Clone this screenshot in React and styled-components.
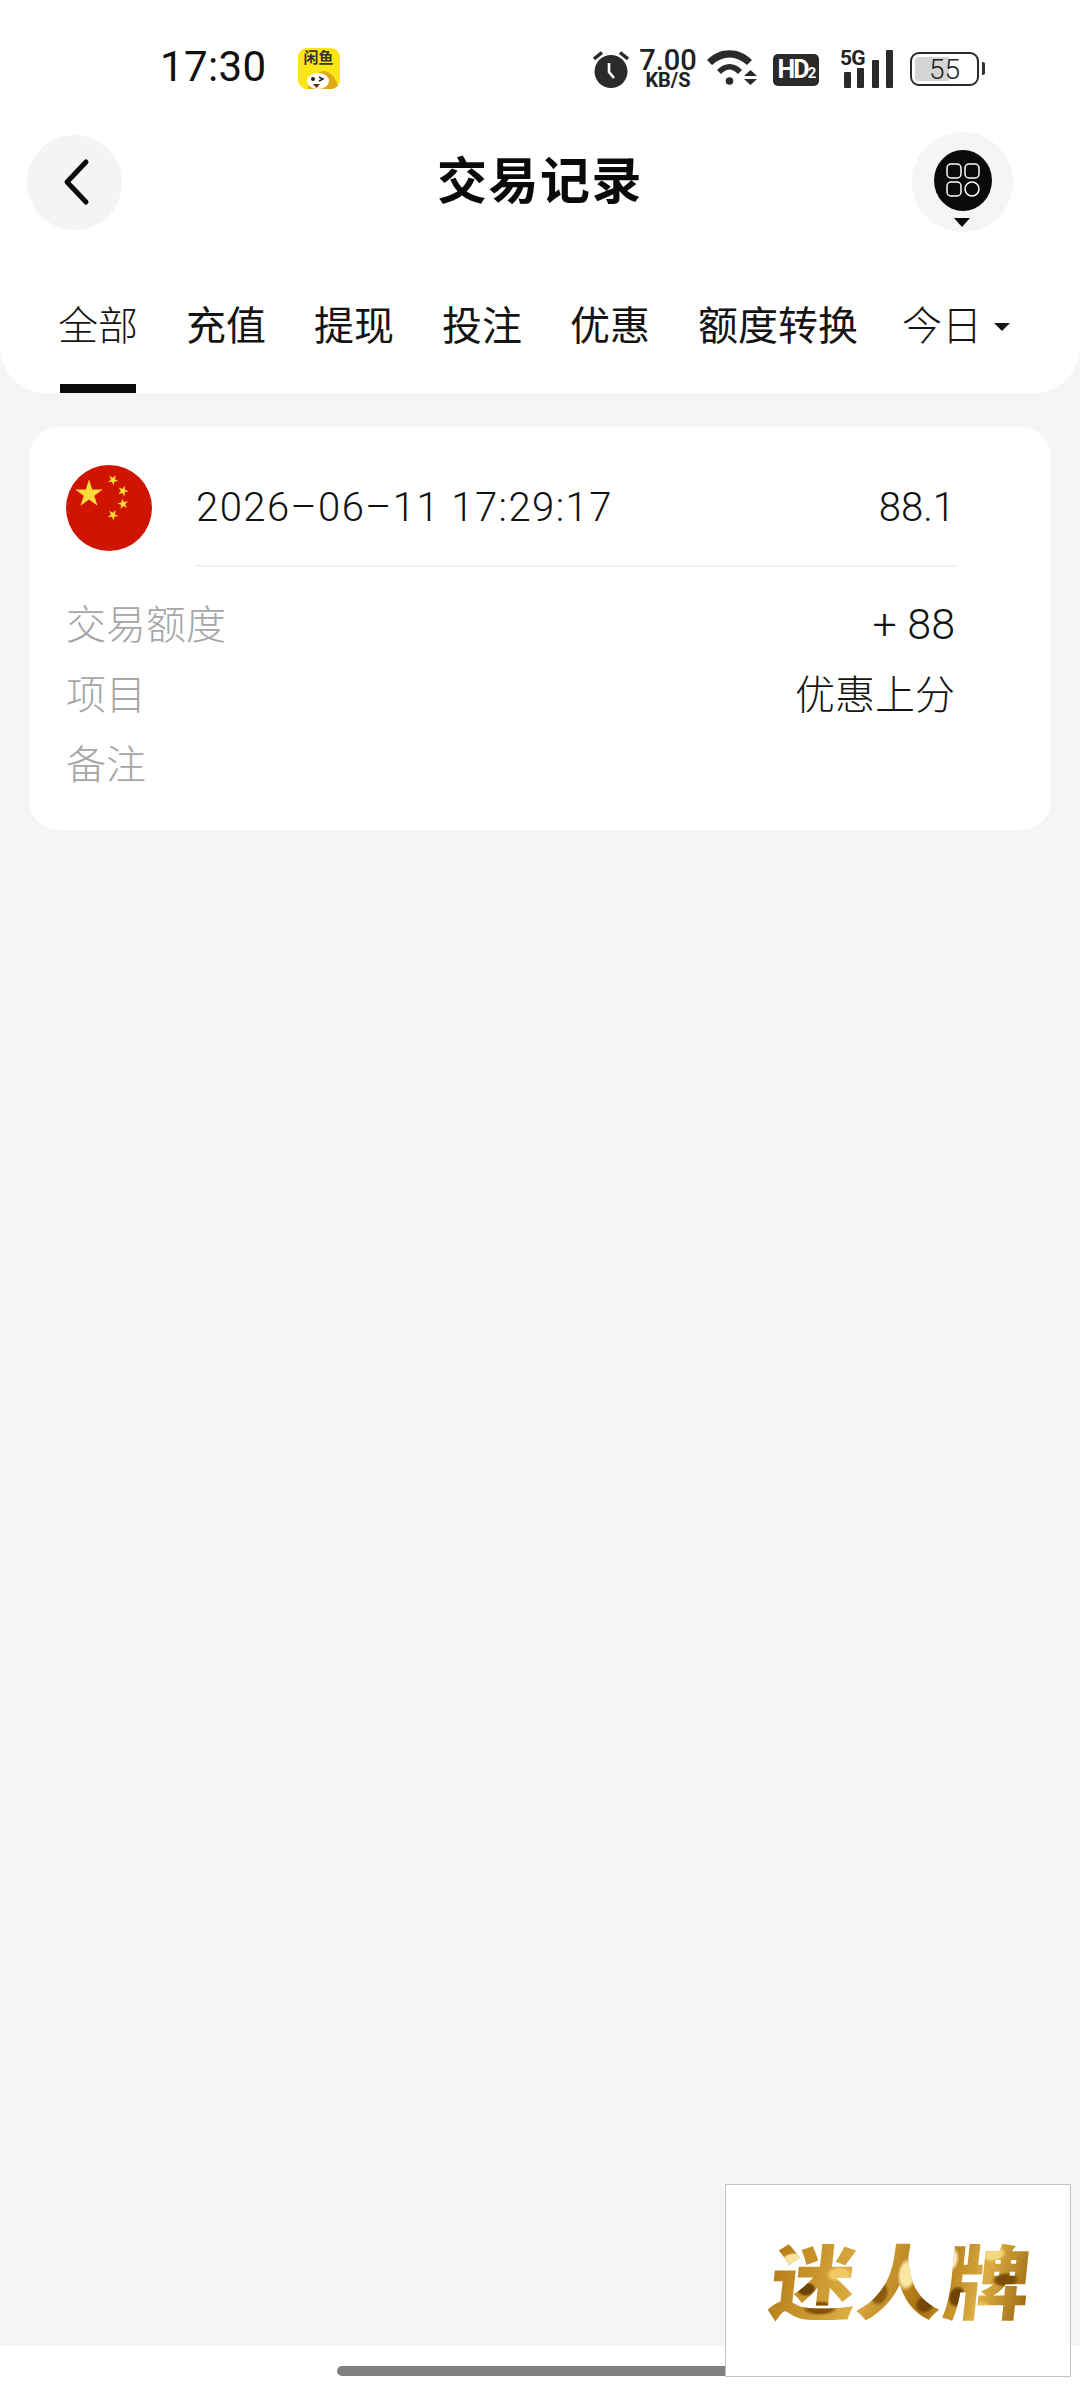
import React from "react";
import styled, { createGlobalStyle } from "styled-components";

const FONT = `Roboto, "Noto Sans CJK SC", sans-serif`;

const Global = createGlobalStyle`
  html, body { margin: 0; padding: 0; background: #fff; }
  body { font-family: ${FONT}; color: #111; }
  * { box-sizing: border-box; }
`;

const Page = styled.div`
  position: relative;
  width: 1080px;
  height: 2400px;
  display: flex;
  flex-direction: column;
  background: #f5f5f5;
  overflow: hidden;
`;

const TopPanel = styled.header`
  height: 393px;
  flex: none;
  background: #fff;
  border-radius: 0 0 46px 46px;
  display: flex;
  flex-direction: column;
`;

const StatusBar = styled.div`
  height: 132px;
  flex: none;
  padding: 48px 101px 0 160px;
  display: flex;
  align-items: flex-start;
`;

const Clock = styled.div`
  font-size: 42px;
  line-height: 40px;
  font-weight: 400;
  margin-top: -1px;
  letter-spacing: 0.4px;
  color: #111;
`;

const AppBadge = styled.div`
  position: relative;
  width: 42px;
  height: 41px;
  margin-left: 31px;
  background: #fde616;
  border-radius: 9px;
  overflow: hidden;
  display: flex;
  justify-content: center;
`;

const AppBadgeText = styled.span`
  font-size: 15px;
  line-height: 16px;
  font-weight: 700;
  margin-top: 2px;
  color: #333;
`;

const AppFace = styled.svg`
  position: absolute;
  left: 0;
  bottom: 0;
`;

const StatusIcons = styled.div`
  margin-left: auto;
  display: flex;
  align-items: flex-start;
`;

const Speed = styled.div`
  width: 54px;
  margin: 0 11px 0 12px;
  display: flex;
  flex-direction: column;
  align-items: center;
  color: #222;
`;

const SpeedValue = styled.span`
  font-size: 29px;
  line-height: 24px;
  font-weight: 500;
`;

const SpeedUnit = styled.span`
  font-size: 20px;
  line-height: 17px;
  font-weight: 700;
`;

const HdBadge = styled.div`
  width: 46px;
  height: 32px;
  margin: 6px 21px 0 15px;
  background: #2a2a2a;
  border-radius: 5px;
  color: #fff;
  font-size: 25px;
  line-height: 32px;
  font-weight: 700;
  letter-spacing: -1.8px;
  text-align: center;
`;

const HdSub = styled.span`
  font-size: 15px;
`;

const SignalBox = styled.div`
  position: relative;
  width: 53px;
  height: 38px;
  margin: 2px 17px 0 0;
`;

const FiveG = styled.span`
  position: absolute;
  left: 0;
  top: -3px;
  font-size: 21px;
  line-height: 22px;
  font-weight: 700;
  letter-spacing: -0.8px;
  color: #222;
`;

const Battery = styled.div`
  position: relative;
  width: 69px;
  height: 34px;
  margin-top: 4px;
  border: 2.5px solid #2a2a2a;
  border-radius: 9px;
  display: flex;
  align-items: center;
  justify-content: center;
  font-size: 28px;
  font-weight: 300;
  color: #222;
  &::before {
    content: "";
    position: absolute;
    left: 3px;
    top: 3px;
    bottom: 3px;
    width: 34px;
    background: #d4d4d4;
    border-radius: 3px 0 0 3px;
  }
  &::after {
    content: "";
    position: absolute;
    right: -8px;
    top: 8px;
    width: 3px;
    height: 13px;
    background: #333;
    border-radius: 0 2px 2px 0;
  }
`;

const BatteryValue = styled.span`
  position: relative;
`;

const NavRow = styled.div`
  height: 100px;
  flex: none;
  padding: 0 67px;
  display: grid;
  grid-template-columns: 1fr auto 1fr;
  align-items: center;
`;

const BackButton = styled.button`
  width: 95px;
  height: 95px;
  margin-left: -40px;
  padding: 0;
  border: 0;
  border-radius: 50%;
  background: #f4f4f4;
  display: flex;
  align-items: center;
  justify-content: center;
  justify-self: start;
`;

const Title = styled.h1`
  margin: 0;
  font-size: 50px;
  line-height: 60px;
  font-weight: 700;
  letter-spacing: 1.5px;
  color: #0a0a0a;
`;

const MenuButton = styled.button`
  position: relative;
  width: 101px;
  height: 100px;
  padding: 0 0 4px;
  border: 0;
  border-radius: 50%;
  background: #f5f5f5;
  display: flex;
  align-items: center;
  justify-content: center;
  justify-self: end;
  &::after {
    content: "";
    position: absolute;
    left: 42px;
    top: 86px;
    border-style: solid;
    border-width: 9px 8.5px 0;
    border-color: #0a0a0a transparent transparent;
  }
`;

const MenuDisc = styled.span`
  width: 58px;
  height: 61px;
  border-radius: 50%;
  background: #0a0a0a;
  display: flex;
  align-items: center;
  justify-content: center;
`;

const Tabs = styled.nav`
  flex: 1;
  padding: 0 0 0 58px;
  display: flex;
  gap: 48px;
  align-items: stretch;
`;

const Tab = styled.div`
  position: relative;
  padding-top: 70px;
  font-size: 40px;
  line-height: 50px;
  font-weight: ${(p) => (p.$active ? 300 : 400)};
  color: #141414;
  white-space: nowrap;
  &::after {
    content: "";
    display: ${(p) => (p.$active ? "block" : "none")};
    position: absolute;
    left: 2px;
    right: 2px;
    bottom: 0;
    height: 9px;
    background: #0a0a0a;
  }
`;

const DateFilter = styled(Tab)`
  font-weight: 300;
  margin-left: -4px;
  display: flex;
  align-items: flex-start;
`;

const Caret = styled.span`
  width: 0;
  height: 0;
  margin: 21px 0 0 12px;
  border-style: solid;
  border-width: 8px 8px 0;
  border-color: #141414 transparent transparent;
`;

const Main = styled.main`
  flex: 1;
  padding: 34px 29px;
`;

const Card = styled.section`
  height: 403px;
  background: #fff;
  border-radius: 30px;
  padding: 38px 94px 0 37px;
`;

const CardHead = styled.div`
  display: flex;
  align-items: flex-start;
`;

const Flag = styled.svg`
  flex: none;
  display: block;
`;

const HeadBody = styled.div`
  flex: 1;
  margin-left: 44px;
  height: 102px;
  border-bottom: 2px solid #f1f1f1;
  display: flex;
  justify-content: space-between;
  padding: 19px 2px 0 0;
  font-size: 40px;
  line-height: 48px;
  font-weight: 300;
  color: #111;
`;

const DateText = styled.span`
  letter-spacing: 1.45px;
`;

const Rows = styled.div`
  margin: 20px 2px 0 0;
  display: flex;
  flex-direction: column;
`;

const Row = styled.div`
  height: 70px;
  display: flex;
  align-items: center;
  justify-content: space-between;
  font-size: 40px;
  font-weight: 300;
`;

const RowLabel = styled.span`
  color: #a6a6a6;
`;

const RowValue = styled.span`
  color: #141414;
  font-size: ${(p) => (p.$numeric ? "43px" : "40px")};
  margin-top: ${(p) => (p.$numeric ? "3px" : "0")};
`;

const HomeBand = styled.footer`
  height: 54px;
  flex: none;
  background: #fff;
  padding-top: 20px;
  display: flex;
  justify-content: center;
`;

const HomeBar = styled.div`
  width: 406px;
  height: 10px;
  background: #808080;
  border-radius: 5px;
`;

const AdBox = styled.aside`
  position: absolute;
  left: 725px;
  top: 2184px;
  width: 346px;
  height: 193px;
  background: #fff;
  border: 1.5px solid #c4c4c4;
  display: flex;
  align-items: center;
  justify-content: center;
`;

const AdText = styled.div`
  font-family: "Noto Sans CJK SC", sans-serif;
  font-size: 86px;
  line-height: 100px;
  font-weight: 900;
  letter-spacing: 1px;
  transform: skewX(-6deg) scaleY(0.94);
  margin: -6px 0 0 6px;
  color: transparent;
  background-color: #c08a18;
  background-image:
    radial-gradient(ellipse 12px 7px at 8% 30%, #f7e3a0 0 70%, transparent 100%),
    radial-gradient(ellipse 10px 8px at 14% 62%, #6e4406 0 65%, transparent 100%),
    radial-gradient(ellipse 18px 8px at 20% 82%, #7f5208 0 65%, transparent 100%),
    radial-gradient(ellipse 14px 9px at 26% 46%, #f0c864 0 60%, transparent 100%),
    radial-gradient(ellipse 10px 14px at 36% 24%, #fbeeba 0 65%, transparent 100%),
    radial-gradient(ellipse 10px 14px at 42% 66%, #8c5a0c 0 65%, transparent 100%),
    radial-gradient(ellipse 10px 18px at 52% 46%, #fbe6a2 0 65%, transparent 100%),
    radial-gradient(ellipse 10px 10px at 60% 78%, #74480a 0 65%, transparent 100%),
    radial-gradient(ellipse 9px 14px at 68% 30%, #fbeeba 0 60%, transparent 100%),
    radial-gradient(ellipse 9px 12px at 72% 70%, #6e4406 0 65%, transparent 100%),
    radial-gradient(ellipse 14px 9px at 84% 24%, #f4d77e 0 60%, transparent 100%),
    radial-gradient(ellipse 14px 8px at 90% 52%, #7c5008 0 65%, transparent 100%),
    radial-gradient(ellipse 10px 8px at 82% 82%, #ecc050 0 60%, transparent 100%),
    linear-gradient(100deg, #b37a12, #dcae44 35%, #a8700e 60%, #dcae44 80%, #96620c);
  -webkit-background-clip: text;
  background-clip: text;
`;

const star = (cx, cy, r, rot = -90) => {
  const pts = [];
  for (let i = 0; i < 10; i++) {
    const rad = i % 2 === 0 ? r : r * 0.382;
    const a = ((rot + i * 36) * Math.PI) / 180;
    pts.push(`${(cx + rad * Math.cos(a)).toFixed(2)},${(cy + rad * Math.sin(a)).toFixed(2)}`);
  }
  return pts.join(" ");
};

const AlarmIcon = () => (
  <svg width="36" height="38" viewBox="0 0 36 38" style={{ marginTop: 2 }}>
    <circle cx="18" cy="21.5" r="16.5" fill="#2a2a2a" />
    <path d="M1 9 L9 2.5 M35 9 L27 2.5" stroke="#2a2a2a" strokeWidth="3.5" />
    <path d="M16 13 V22 L21 28" stroke="#fff" strokeWidth="2.6" fill="none" />
  </svg>
);

const WifiIcon = () => (
  <svg width="52" height="38" viewBox="0 0 52 38">
    <path d="M1 12 C14 -1 33 -1 46 12 L41 17 C30 7 17 7 6 17 Z" fill="#2a2a2a" />
    <path d="M11 22 C18 14 29 14 36 22 L32 26 C26 20 21 20 15 26 Z" fill="#2a2a2a" />
    <circle cx="23.5" cy="33" r="3.8" fill="#2a2a2a" />
    <path d="M38 28 L44.5 22 L51 28 Z M38 31 H51 L44.5 37 Z" fill="#2a2a2a" />
  </svg>
);

const SignalIcon = () => (
  <svg width="53" height="38" viewBox="0 0 53 38" style={{ display: "block" }}>
    <rect x="4" y="22" width="7" height="16" rx="1" fill="#2a2a2a" />
    <rect x="17" y="18" width="7" height="20" rx="1" fill="#2a2a2a" />
    <rect x="32" y="10" width="7" height="28" rx="1" fill="#2a2a2a" />
    <rect x="46" y="0" width="7" height="38" rx="1" fill="#2a2a2a" />
  </svg>
);

const Chevron = () => (
  <svg width="30" height="48" viewBox="0 0 30 48" style={{ marginLeft: 2 }}>
    <path d="M25 4 L6 24 L25 44" fill="none" stroke="#0a0a0a" strokeWidth="5" strokeLinecap="round" strokeLinejoin="round" />
  </svg>
);

const GridIcon = () => (
  <svg width="34" height="34" viewBox="0 0 34 34" fill="none" stroke="#fff" strokeWidth="1.5">
    <rect x="1" y="1" width="14" height="14" rx="4" />
    <rect x="19" y="1" width="14" height="14" rx="4" />
    <rect x="1" y="19" width="14" height="14" rx="4" />
    <circle cx="26" cy="26" r="7" />
  </svg>
);

const FlagIcon = () => (
  <Flag width="86" height="86" viewBox="0 0 86 86">
    <circle cx="43" cy="43" r="43" fill="#cf1500" />
    <polygon points={star(23, 29, 14.5)} fill="#fbdc3b" />
    <polygon points={star(47, 15, 5.6, -60)} fill="#fbdc3b" />
    <polygon points={star(57, 26, 5.6, -70)} fill="#fbdc3b" />
    <polygon points={star(57, 39, 5.6, -100)} fill="#fbdc3b" />
    <polygon points={star(47, 50, 5.6, -60)} fill="#fbdc3b" />
  </Flag>
);

const tabs = ["充值", "提现", "投注", "优惠", "额度转换"];

const rows = [
  { label: "交易额度", value: "+ 88", numeric: true },
  { label: "项目", value: "优惠上分" },
  { label: "备注", value: "" },
];

export default function App() {
  return (
    <Page>
      <Global />
      <TopPanel>
        <StatusBar>
          <Clock>17:30</Clock>
          <AppBadge>
            <AppBadgeText>闲鱼</AppBadgeText>
            <AppFace width="42" height="22" viewBox="0 0 42 22">
              <path d="M10 22 C10 10 20 4 28 4 C36 8 40 15 40 22 Z" fill="#e0a91a" />
              <ellipse cx="20" cy="14" rx="11" ry="8" fill="#fff" />
              <circle cx="15" cy="12" r="2" fill="#222" />
              <path d="M21 10 L25 12 L21 14" stroke="#222" strokeWidth="1.5" fill="none" />
              <path d="M15 17 H22 L18.5 21 Z" fill="#5a2d0c" />
            </AppFace>
          </AppBadge>
          <StatusIcons>
            <AlarmIcon />
            <Speed>
              <SpeedValue>7.00</SpeedValue>
              <SpeedUnit>KB/S</SpeedUnit>
            </Speed>
            <WifiIcon />
            <HdBadge>
              HD<HdSub>2</HdSub>
            </HdBadge>
            <SignalBox>
              <SignalIcon />
              <FiveG>5G</FiveG>
            </SignalBox>
            <Battery>
              <BatteryValue>55</BatteryValue>
            </Battery>
          </StatusIcons>
        </StatusBar>
        <NavRow>
          <BackButton aria-label="返回">
            <Chevron />
          </BackButton>
          <Title>交易记录</Title>
          <MenuButton aria-label="菜单">
            <MenuDisc>
              <GridIcon />
            </MenuDisc>
          </MenuButton>
        </NavRow>
        <Tabs>
          <Tab $active>全部</Tab>
          {tabs.map((t) => (
            <Tab key={t}>{t}</Tab>
          ))}
          <DateFilter>
            今日
            <Caret />
          </DateFilter>
        </Tabs>
      </TopPanel>
      <Main>
        <Card>
          <CardHead>
            <FlagIcon />
            <HeadBody>
              <DateText>2026–06–11 17:29:17</DateText>
              <span>88.1</span>
            </HeadBody>
          </CardHead>
          <Rows>
            {rows.map((r) => (
              <Row key={r.label}>
                <RowLabel>{r.label}</RowLabel>
                <RowValue $numeric={r.numeric}>{r.value}</RowValue>
              </Row>
            ))}
          </Rows>
        </Card>
      </Main>
      <HomeBand>
        <HomeBar />
      </HomeBand>
      <AdBox>
        <AdText>迷人牌</AdText>
      </AdBox>
    </Page>
  );
}
